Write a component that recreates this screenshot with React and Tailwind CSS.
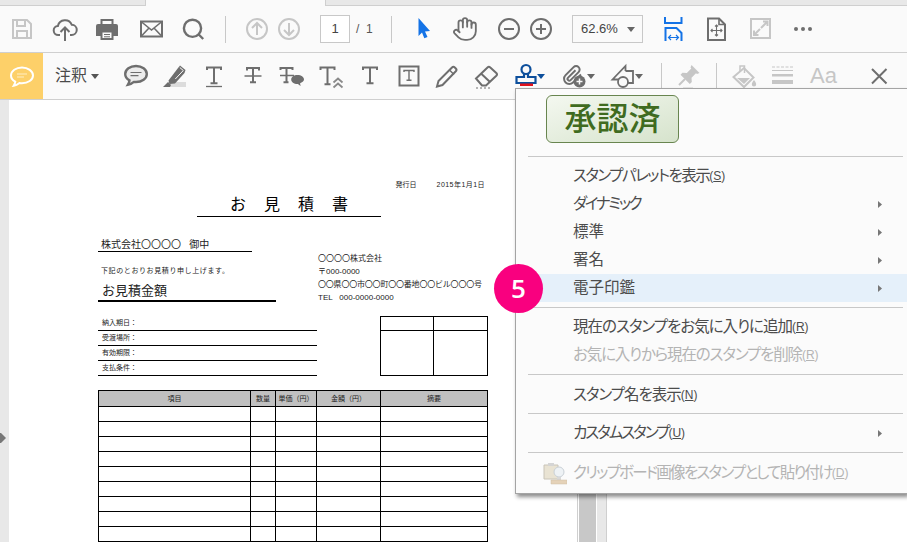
import React from "react";
import { Hand } from "lucide-react";

const Ico = ({ className = "", children, ...p }) => (
  <svg viewBox="0 0 26 26" fill="none" stroke="currentColor" strokeWidth="2" className={`w-[26px] h-[26px] shrink-0 ${className}`} {...p}>
    {children}
  </svg>
);
const Caret = ({ className = "" }) => (
  <svg viewBox="0 0 8 5" className={`w-[8px] h-[5px] shrink-0 ${className}`}>
    <path d="M0 0h8L4 5z" fill="currentColor" />
  </svg>
);
const Sep = ({ className = "" }) => <div className={`w-px h-[27px] bg-[#c8c8c8] shrink-0 ${className}`} />;

const ROWS = ["納入期日：", "受渡場所：", "有効期限：", "支払条件："];
const COLS = ["w-[152px]", "w-[25px]", "w-[41px]", "w-[64px]", "w-[107px]"];
const HEAD = ["項目", "数量", "単価（円）", "金額（円）", "摘要"];

function Doc() {
  return (
    <div className="flex-1 h-full bg-white pt-[80px] pl-[89px] text-black overflow-hidden">
      <div className="w-[390px]">
        <div className="h-[10px] flex justify-end gap-[20px] pr-[3px] text-[7px] leading-[10px] text-[#222]">
          <span>発行日</span>
          <span className="tracking-[0.45px]">2015年1月1日</span>
        </div>
        <div className="mt-[6px] ml-[99px] w-[184px] h-[21px] border-b border-black flex justify-center gap-[18px] text-[16px] leading-[18px]">
          <span>お</span><span>見</span><span>積</span><span>書</span>
        </div>
        <div className="mt-[21px] flex">
          <div className="w-[220px] shrink-0">
            <div className="w-[154px] h-[14px] border-b border-black pl-[3px] text-[10px] leading-[13px] text-[#222]">株式会社〇〇〇〇&nbsp;&nbsp;&nbsp;御中</div>
            <div className="mt-[13px] h-[10px] pl-[3px] text-[7px] leading-[11px] text-[#222] tracking-[0.6px]">下記のとおりお見積り申し上げます。</div>
            <div className="mt-[6px] w-[178px] h-[21px] border-b-2 border-black pl-[4px] text-[13px] leading-[19px] text-[#222]">お見積金額</div>
            <div className="mt-[14px] w-[219px]">
              {ROWS.map((r) => (
                <div key={r} className="h-[15px] border-b border-black pl-[4px] text-[7px] leading-[14px] text-[#222]">{r}</div>
              ))}
            </div>
          </div>
          <div className="flex-1">
            <div className="mt-[14px] text-[8px] leading-[13px] text-[#222]">
              <div>〇〇〇〇株式会社</div>
              <div>〒000-0000</div>
              <div className="whitespace-nowrap tracking-[-0.2px]">〇〇県〇〇市〇〇町〇〇番地〇〇ビル〇〇〇号</div>
              <div>TEL&nbsp;&nbsp;&nbsp;000-0000-0000</div>
            </div>
            <div className="mt-[12px] ml-[62px] w-[108px] h-[60px] border border-black grid grid-cols-[53px_1fr] grid-rows-[14px_1fr]">
              <div className="border-r border-b border-black" />
              <div className="border-b border-black" />
              <div className="border-r border-black" />
              <div />
            </div>
          </div>
        </div>
        <table className="mt-[14px] w-[389px] table-fixed border-collapse">
          <colgroup>
            {COLS.map((c) => <col key={c} className={c} />)}
          </colgroup>
          <thead>
            <tr>
              {HEAD.map((h) => (
                <th key={h} className="h-[16px] p-0 border border-black bg-[#c0c0c0] text-[7px] leading-[7px] font-normal text-[#222] whitespace-nowrap overflow-hidden">{h}</th>
              ))}
            </tr>
          </thead>
          <tbody>
            {Array.from({ length: 9 }).map((_, i) => (
              <tr key={i}>
                {HEAD.map((h) => <td key={h} className="h-[15px] p-0 border border-black" />)}
              </tr>
            ))}
          </tbody>
        </table>
      </div>
    </div>
  );
}

const Item = ({ label, m, arrow, disabled, tracking = "", className = "", children }) => (
  <div className={`h-[28px] flex items-center relative pl-[57px] pr-[25px] text-[15.5px] [font-feature-settings:'palt'] ${disabled ? "text-[#b4b4b4]" : "text-[#4c4c4c]"} ${className}`}>
    {children}
    <span className={`whitespace-nowrap ${tracking}`}>{label}</span>
    {m && (
      <span className="text-[12px] whitespace-nowrap">(<span className="underline">{m}</span>)</span>
    )}
    {arrow && (
      <svg viewBox="0 0 4 7" className="w-[4px] h-[7px] ml-auto text-[#777]"><path d="M0 0l4 3.5L0 7z" fill="currentColor" /></svg>
    )}
  </div>
);
const MSep = ({ className = "" }) => <div className={`h-px ml-[12px] mr-[4px] bg-[#c8c8c8] ${className}`} />;

export default function App() {
  return (
    <div className="relative w-[907px] h-[542px] overflow-hidden bg-white font-['Liberation_Sans','Noto_Sans_CJK_JP',sans-serif]">
      {/* tab strip */}
      <div className="flex h-[6px]">
        <div className="w-[146px] bg-[#e8e8e8] border-r border-b border-[#cfcfcf]" />
        <div className="w-[179px] bg-[#fafafa]" />
        <div className="flex-1 bg-[#e8e8e8] border-l border-b border-[#cfcfcf]" />
      </div>

      {/* toolbar 1 */}
      <div className="h-[47px] flex items-center bg-[#fafafa] border-b border-[#cfcfcf] text-[#6e6e6e]">
        <Ico className="ml-[9px] text-[#c6c6c6]">
          <path d="M4 4h14l4 4v14H4z" /><path d="M8 4v6h8V4M8 22v-7h10v7" />
        </Ico>
        <Ico className="ml-[17px]">
          <path d="M8 19H6.500a4.500 4.500 0 0 1-.6-9A7.300 7.300 0 0 1 19.800 8.800 5.100 5.100 0 0 1 19.500 19H18" />
          <path d="M13 25V12M8.500 16l4.500-4.500 4.500 4.500" />
        </Ico>
        <Ico className="ml-[16px]">
          <path d="M7.500 8V4h11v4" />
          <path d="M2 10a2 2 0 0 1 2-2h18a2 2 0 0 1 2 2v10h-5v-5H7v5H2z" fill="currentColor" stroke="none" />
          <path d="M7.500 15.500h11V23h-11z" />
          <path d="M10 18.500h6M10 20.800h6" strokeWidth="1" />
        </Ico>
        <Ico className="ml-[18px]">
          <path d="M3 5.500h21v15H3z" /><path d="M3 5.500l10.500 8.500L24 5.500M3 20.500l8-8.500M24 20.500l-8-8.500" strokeWidth="1.600" />
        </Ico>
        <Ico className="ml-[16px]" strokeWidth="2.400">
          <circle cx="12.500" cy="12.300" r="8.600" /><path d="M18.700 18.500l4.500 4.500" />
        </Ico>
        <Sep className="ml-[19px]" />
        <Ico className="ml-[18px] text-[#c6c6c6]">
          <circle cx="13" cy="13" r="10" /><path d="M13 19V7.500M8 12l5-5 5 5" />
        </Ico>
        <Ico className="ml-[6px] text-[#c6c6c6]">
          <circle cx="13" cy="13" r="10" /><path d="M13 7v11.500M8 14l5 5 5-5" />
        </Ico>
        <div className="ml-[18px] w-[30px] h-[28px] bg-white border border-[#c8c8c8] flex items-center justify-center text-[13px] text-[#444]">1</div>
        <div className="ml-[6px] w-[16px] text-[12px] text-[#555] whitespace-nowrap">/&nbsp;&nbsp;1</div>
        <Sep className="ml-[19px]" />
        <Ico className="ml-[18px]">
          <path d="M8.500 2L20 15l-5 .5 2.500 5.500-3.200 1.200L12 16.500 8.500 20z" fill="#1473e6" stroke="none" />
        </Ico>
        <Hand size={26} strokeWidth={1.7} className="ml-[16px] shrink-0" />
        <Ico className="ml-[18px]">
          <circle cx="13" cy="13" r="10" /><path d="M8 13h10" />
        </Ico>
        <Ico className="ml-[6px]">
          <circle cx="13" cy="13" r="10" /><path d="M8 13h10M13 8v10" />
        </Ico>
        <div className="ml-[18px] w-[71px] h-[28px] border border-[#c8c8c8] flex items-center pl-[8px] pr-[7px] text-[13px] text-[#444]">
          <span>62.6%</span>
          <Caret className="ml-auto text-[#666]" />
        </div>
        <Ico className="ml-[17px] text-[#1473e6]">
          <path d="M5 1v7M21.500 1v7M5 7h16.500" /><path d="M5.500 25V12h11l5 5v8" />
          <path d="M8.500 21.500h10M11 19l-2.500 2.500L11 24M16 19l2.500 2.500L16 24" strokeWidth="1.200" />
        </Ico>
        <Ico className="ml-[17px]">
          <path d="M5 2.500h11l6 6v15.500H5z" /><path d="M16 2.500v6h6" strokeWidth="1.600" />
          <path d="M13.500 9v11M8 14.500h11M12 10.500l1.500-1.500 1.500 1.500M12 18.500l1.500 1.500 1.500-1.500M9.500 13l-1.500 1.500 1.500 1.500M17.500 13l1.500 1.500-1.500 1.500" strokeWidth="1.100" />
        </Ico>
        <Ico className="ml-[18px] text-[#c6c6c6]">
          <path d="M4 3h19v19H4z" />
          <path d="M14 12l6-6M16 5.500h4.500V10M13 13l-6 6M7 14.500V19h4.500" strokeWidth="2" />
        </Ico>
        <Ico className="ml-[17px]">
          <circle cx="6" cy="13" r="2" fill="currentColor" stroke="none" />
          <circle cx="13" cy="13" r="2" fill="currentColor" stroke="none" />
          <circle cx="20" cy="13" r="2" fill="currentColor" stroke="none" />
        </Ico>
      </div>

      {/* toolbar 2 */}
      <div className="h-[47px] flex items-center bg-[#fafafa] border-b border-[#cfcfcf] text-[#6e6e6e]">
        <div className="w-[43px] h-[46px] bg-[#fdd069] flex items-center justify-center shrink-0">
          <Ico className="text-white">
            <path d="M13 4.500C7 4.500 2 8 2 12.500c0 2.600 1.600 4.800 4.300 6.200-.2 1.500-.8 2.800-1.600 4 2.200-.3 4.300-1.500 5.800-2.700.8.100 1.600.2 2.500.2 6 0 11-3.400 11-7.700S19 4.500 13 4.500z" />
            <path d="M8 11h10M8 14h7" strokeWidth="1" className="text-[#ffeec4]" />
          </Ico>
        </div>
        <div className="ml-[12px] w-[33px] text-[16px] text-[#4a4a4a] whitespace-nowrap">注釈</div>
        <Caret className="ml-[3px] text-[#555]" />
        <Ico className="ml-[24px]" strokeWidth="2.400">
          <path d="M13 3C7 3 2.200 6.500 2.200 11c0 2.700 1.600 5 4.300 6.400-.2 1.700-.9 3.200-1.700 4.500 2.300-.3 4.500-1.600 6.100-3 .7.100 1.400.1 2.100.1 6 0 10.800-3.500 10.800-8S19 3 13 3z" fill="#ececec" />
          <path d="M7.500 9.500h11M7.500 12.700h8" strokeWidth="1.200" />
        </Ico>
        <Ico className="ml-[13px]" stroke="none">
          <path d="M6 19h18v5H6z" fill="#dcdcdc" />
          <path d="M18 2.500l5.500 4.500-1 3L13 20.500l-5.500.5-1-3.500L16 5z" fill="currentColor" />
          <path d="M17.800 4.500l3.500 3-8 8.500" stroke="#fafafa" strokeWidth="1" />
          <path d="M1 24l5-5 3 3-1 2z" fill="currentColor" />
        </Ico>
        <Ico className="ml-[13px]">
          <path d="M6 7V4.500h14V7M13 4.500V20M9.500 20.300h7" /><path d="M5 23.500h16" strokeWidth="1.300" />
        </Ico>
        <Ico className="ml-[13px]">
          <path d="M7 7.500V5h12v2.500M13 5v14M10 19.300h6" /><path d="M4.500 13h17" strokeWidth="1.500" />
        </Ico>
        <Ico className="ml-[13px]">
          <path d="M1.500 7V5h12v2M7.500 5v14M4.500 19.300h5" /><path d="M1 12.500h14" strokeWidth="1.500" />
          <path d="M18.500 12c-3.600 0-6.300 2-6.300 4.500 0 2.500 2.700 4.500 6.300 4.500l.5 0c.6.900 1.600 1.500 2.800 1.700-.5-.8-.7-1.600-.7-2.400 1.800-.8 3.900-2.200 3.900-3.800 0-2.500-2.900-4.500-6.500-4.500z" fill="currentColor" stroke="none" />
        </Ico>
        <Ico className="ml-[14px]">
          <path d="M1.500 7V4.500h14V7M8.500 4.500V21M5.500 21.300h6" />
          <path d="M14.500 19.500l4.500-4 4.500 4M14.500 24.500l4.500-4 4.500 4" strokeWidth="1.800" className="text-[#8a8a8a]" />
        </Ico>
        <Ico className="ml-[12px]">
          <path d="M6 7V4.500h14V7M13 4.500V20M9.500 20.300h7" />
        </Ico>
        <Ico className="ml-[13px]">
          <path d="M3.500 3.500h19v19h-19z" />
          <path d="M8 9V7.500h10V9M13 7.500V17M10.500 17.300h5" strokeWidth="1.400" />
        </Ico>
        <Ico className="ml-[12px]">
          <path d="M4.500 18L18 4.500a2 2 0 0 1 2.800 0l1 1a2 2 0 0 1 0 2.800L8.500 22l-5.500 1.500z" />
          <path d="M15.500 7l4.500 4.500" strokeWidth="1.500" />
        </Ico>
        <Ico className="ml-[13px]">
          <path d="M3 15.500L14.500 4.500a2 2 0 0 1 2.800 0l6 5.500a2 2 0 0 1 0 2.800L13 22.500H9z" />
          <path d="M8 10.500l9 8.500" /><path d="M3 25h2M7 25h2M11 25h2M15 25h2" strokeWidth="1" />
        </Ico>
        <Ico className="ml-[14px] text-[#0d4f9c]" strokeWidth="2.200">
          <circle cx="13" cy="6.500" r="4.500" /><path d="M11 11v3H3.500v6h19v-6H15v-3" />
          <path d="M7 20.500h13V23H7z" fill="#e0121c" stroke="none" />
        </Ico>
        <Caret className="-ml-[2px] text-[#0d4f9c]" />
        <Ico className="ml-[16px]">
          <path d="M20 11.500l-8 8a5.200 5.200 0 0 1-7.400-7.400l8-8a3.500 3.500 0 0 1 5 5l-8 8a1.700 1.700 0 0 1-2.500-2.500l7.400-7.400" />
          <circle cx="18.500" cy="18.500" r="6" fill="currentColor" stroke="none" />
          <path d="M15.500 18.500h6M18.500 15.500v6" stroke="#fafafa" strokeWidth="1.500" />
        </Ico>
        <Caret className="text-[#666]" />
        <Ico className="ml-[15px]" strokeWidth="1.800">
          <path d="M9 16.500H2.500L15.500 3v5" /><path d="M15.500 8H23v12h-5.500" />
          <circle cx="13" cy="19" r="5" />
        </Ico>
        <Caret className="-ml-[1px] text-[#666]" />
        <Sep className="ml-[18px]" />
        <Ico className="ml-[14px] text-[#c6c6c6]" stroke="none">
          <path d="M15.500 2l8 8-2.500 1-1-.8-4.500 4.500.3 4.300-2 2L4.500 11.800l2-2 4.300.3L15.300 5.600l-.8-1z" fill="currentColor" />
          <path d="M9 16l-6 6" stroke="currentColor" strokeWidth="2" />
          <path d="M7 24h10v1.500H7z" fill="#e6e6e6" />
        </Ico>
        <Sep className="ml-[14px]" />
        <Ico className="ml-[14px] text-[#c6c6c6]">
          <path d="M2.500 14L13 5l9.500 9.500L13 24z" />
          <path d="M6 15h13l-6 6z" fill="currentColor" stroke="none" />
          <path d="M9 9V3h4.500v7" strokeWidth="1.500" />
          <path d="M23 17c-1.500 2-2.200 3.200-2.200 4.300a2.200 2.200 0 0 0 4.400 0c0-1.100-.7-2.300-2.200-4.300z" fill="currentColor" stroke="none" />
        </Ico>
        <Ico className="ml-[13px] text-[#c6c6c6]" stroke="none">
          <path d="M2 4h21" stroke="currentColor" strokeWidth="1" strokeDasharray="3 1.500" />
          <path d="M2 7.500h21" stroke="currentColor" strokeWidth="1" />
          <path d="M2 11h21v2.500H2zM2 17h21v4H2z" fill="currentColor" />
        </Ico>
        <div className="ml-[14px] w-[24px] text-[22px] leading-[26px] text-[#c6c6c6] whitespace-nowrap">Aa</div>
        <Ico className="ml-[32px]">
          <path d="M6 6l14.500 14.500M20.500 6L6 20.500" />
        </Ico>
      </div>

      {/* work area */}
      <div className="h-[442px] flex">
        <div className="w-[9px] h-full bg-[#e8e8e8] shrink-0" />
        <Doc />
        <div className="w-[30px] h-full shrink-0 flex border-x border-[#cfcfcf]">
          <div className="w-[17px] bg-[#c8c8c8] ml-px" />
          <div className="flex-1 bg-[#e8e8e8] border-l border-white" />
        </div>
        <div className="w-[300px] h-full bg-white shrink-0" />
      </div>

      {/* left handle */}
      <svg viewBox="0 0 6 10" className="absolute left-0 top-[433px] w-[6px] h-[10px] text-[#777]">
        <path d="M0 0h1l5 5-5 5H0z" fill="currentColor" />
      </svg>

      {/* stamp menu */}
      <div className="absolute left-[515px] top-[88px] right-0 bg-[#fbfbfb] border border-[#a4a4a4] border-r-0 shadow-[2px_3px_4px_rgba(0,0,0,0.45)] pt-[6px] pb-[6px]">
        <div className="ml-[30px] w-[133px] h-[48px] rounded-[6px] border border-[#68854f] bg-gradient-to-br from-[#f4f8f0] to-[#d6e3cc] flex items-center justify-center text-[32px] leading-none font-medium text-[#3f6b20]">承認済</div>
        <MSep className="mt-[13px]" />
        <div className="mt-[5px]">
          <Item label="スタンプパレットを表示" m="S" tracking="tracking-[-1.5px]" />
          <Item label="ダイナミック" arrow tracking="tracking-[-2.3px]" />
          <Item label="標準" arrow />
          <Item label="署名" arrow />
          <Item label="電子印鑑" arrow className="bg-[#e5f0fa]" />
        </div>
        <MSep className="mt-[5px]" />
        <div className="mt-[5px]">
          <Item label="現在のスタンプをお気に入りに追加" m="R" tracking="tracking-[-1px]" />
          <Item label="お気に入りから現在のスタンプを削除" m="R" disabled tracking="tracking-[-1.15px]" />
        </div>
        <MSep className="mt-[5px]" />
        <Item label="スタンプ名を表示" m="N" className="mt-[6px]" tracking="tracking-[-1px]" />
        <MSep className="mt-[4px]" />
        <Item label="カスタムスタンプ" m="U" arrow className="mt-[5px]" tracking="tracking-[-2px]" />
        <MSep className="mt-[5px]" />
        <Item label="クリップボード画像をスタンプとして貼り付け" m="D" disabled className="mt-[6px]" tracking="tracking-[-1.75px]">
          <svg viewBox="0 0 24 24" className="absolute left-[27px] top-[2px] w-[24px] h-[24px]">
            <path d="M1 4h14v14H1z" fill="#e9e3d3" stroke="#c9c4b8" />
            <path d="M5 2h6v3H5z" fill="#d5d5d5" />
            <circle cx="16" cy="11" r="5" fill="#eef2f5" stroke="#c9d0d6" />
            <path d="M14 16h4v3h-4z" fill="#d8d8d8" />
            <path d="M8 19h16v4H8z" fill="#e5d2b8" stroke="#cdbca6" strokeWidth="0.500" />
          </svg>
        </Item>
      </div>

      {/* step badge */}
      <div className="absolute left-[494px] top-[264px] w-[49px] h-[49px] rounded-full bg-[#f9007f] flex items-center justify-center text-white text-[26px] font-semibold font-['Open_Sans',sans-serif]">5</div>
    </div>
  );
}
